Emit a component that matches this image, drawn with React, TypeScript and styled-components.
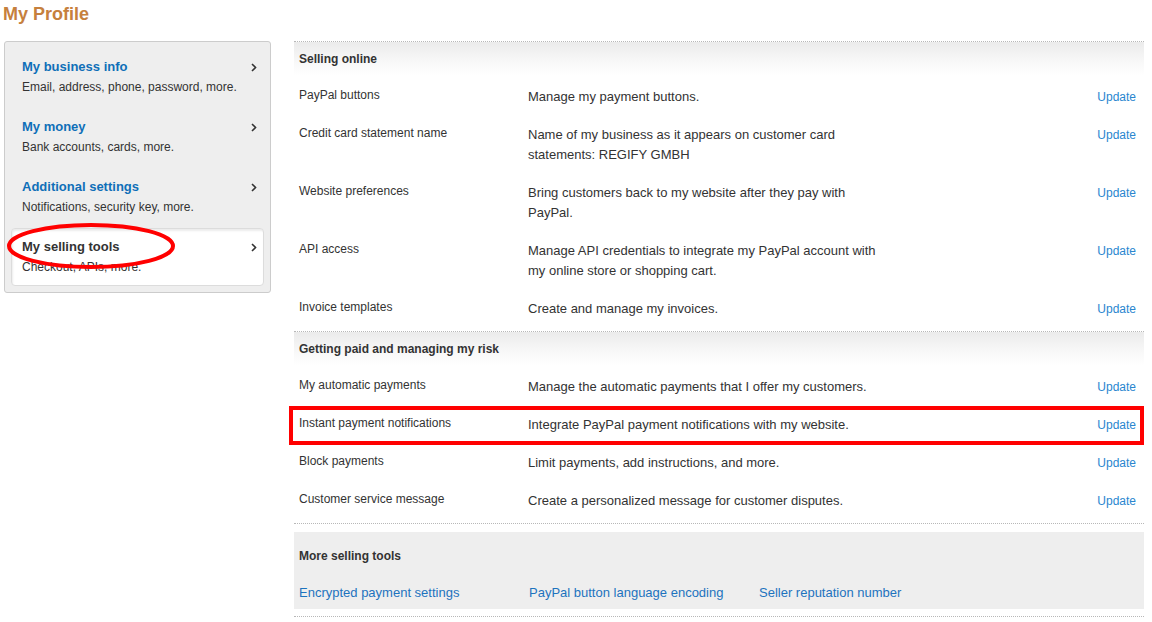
import React from "react";
import styled, { createGlobalStyle } from "styled-components";

// ─── Global ──────────────────────────────────────────────────────────────────
const GlobalStyle = createGlobalStyle`
  body {
    margin: 0;
    background: #fff;
    font-family: "Liberation Sans", Arial, sans-serif;
    color: #333;
  }
`;

// ─── Layout ──────────────────────────────────────────────────────────────────
const Page = styled.div`
  width: 1152px;
  height: 622px;
  overflow: hidden;
  padding: 3px 0 0 3px;
  box-sizing: border-box;
`;

const PageTitle = styled.h1`
  margin: 0;
  font-size: 18px;
  line-height: 22px;
  font-weight: 700;
  color: #c6803d;
`;

const Columns = styled.div`
  display: flex;
  align-items: flex-start;
  gap: 23px;
  margin-top: 16px;
  padding-left: 1px;
`;

// ─── Sidebar ─────────────────────────────────────────────────────────────────
const Sidebar = styled.nav`
  width: 267px;
  box-sizing: border-box;
  background: #eeeeee;
  border: 1px solid #cccccc;
  border-radius: 3px;
  padding: 6px;
  display: flex;
  flex-direction: column;
  gap: 2px;
`;

const NavItem = styled.div<{ $active?: boolean }>`
  position: relative;
  height: 58px;
  box-sizing: border-box;
  padding: 10px 6px 0 10px;
  border-radius: 4px;
  background: ${(p) => (p.$active ? "#fff" : "transparent")};
  border: 1px solid ${(p) => (p.$active ? "#dcdcdc" : "transparent")};
  box-shadow: ${(p) => (p.$active ? "inset 1px 2px 2px rgba(0,0,0,0.08)" : "none")};
`;

const NavHead = styled.div`
  display: flex;
  align-items: center;
  justify-content: space-between;
`;

const NavTitle = styled.span<{ $active?: boolean }>`
  font-size: 13px;
  line-height: 16px;
  font-weight: 700;
  color: ${(p) => (p.$active ? "#333" : "#0f6fb8")};
`;

const NavDesc = styled.div`
  margin-top: 4px;
  font-size: 12px;
  line-height: 16px;
  color: #333;
`;

// red hand-drawn annotation over the active item
const Ellipse = styled.svg`
  position: absolute;
  left: -12px;
  top: -12px;
  pointer-events: none;
`;

const Chevron = () => (
  <svg width="6" height="9" viewBox="0 0 6 9">
    <path d="M1 1 L4.5 4.5 L1 8" fill="none" stroke="#333" strokeWidth="1.6" />
  </svg>
);

// ─── Main table ──────────────────────────────────────────────────────────────
const Main = styled.main`
  width: 850px;
`;

const Section = styled.section`
  border-top: 1px dotted #b8b8b8;
  padding-bottom: 6px;
`;

const SectionHead = styled.div`
  height: 33px;
  display: flex;
  align-items: center;
  padding-left: 5px;
  font-size: 12px;
  font-weight: 700;
  color: #333;
  background: linear-gradient(to bottom, #ebebeb 0%, #f6f6f6 50%, #fff 100%);
`;

const Row = styled.div<{ $marked?: boolean }>`
  position: relative;
  display: grid;
  grid-template-columns: 229px 1fr 60px;
  padding: 12px 8px 6px 5px;
  &::after {
    content: "";
    display: ${(p) => (p.$marked ? "block" : "none")};
    position: absolute;
    left: -5px;
    right: 0;
    top: 3px;
    bottom: -4px;
    border: 4px solid #ff0000;
    pointer-events: none;
  }
`;

const Label = styled.div`
  font-size: 12px;
  line-height: 16px;
  color: #333;
`;

const Desc = styled.div`
  font-size: 13px;
  line-height: 20px;
  color: #333;
  max-width: 360px;
`;

const UpdateLink = styled.a`
  justify-self: end;
  font-size: 12px;
  line-height: 20px;
  color: #2a86cf;
  text-decoration: none;
`;

const MoreSection = styled.section`
  border-top: 1px dotted #b8b8b8;
  border-bottom: 1px dotted #b8b8b8;
  padding: 8px 0 7px;
`;

const MoreBox = styled.div`
  background: #eeeeee;
  height: 77px;
  box-sizing: border-box;
  padding: 16px 5px 0;
`;

const MoreTitle = styled.div`
  font-size: 12px;
  font-weight: 700;
  line-height: 16px;
  color: #333;
`;

const MoreLinks = styled.div`
  display: grid;
  grid-template-columns: 230px 230px 230px;
  margin-top: 20px;
`;

const MoreLink = styled.a`
  font-size: 13px;
  line-height: 18px;
  color: #1d73be;
  text-decoration: none;
`;

// ─── Data ────────────────────────────────────────────────────────────────────
const navItems = [
  { title: "My business info", desc: "Email, address, phone, password, more." },
  { title: "My money", desc: "Bank accounts, cards, more." },
  { title: "Additional settings", desc: "Notifications, security key, more." },
  { title: "My selling tools", desc: "Checkout, APIs, more.", active: true },
];

type Item = { label: string; desc: string; marked?: boolean };

const sections: { title: string; rows: Item[] }[] = [
  {
    title: "Selling online",
    rows: [
      { label: "PayPal buttons", desc: "Manage my payment buttons." },
      {
        label: "Credit card statement name",
        desc: "Name of my business as it appears on customer card statements: REGIFY GMBH",
      },
      {
        label: "Website preferences",
        desc: "Bring customers back to my website after they pay with PayPal.",
      },
      {
        label: "API access",
        desc: "Manage API credentials to integrate my PayPal account with my online store or shopping cart.",
      },
      { label: "Invoice templates", desc: "Create and manage my invoices." },
    ],
  },
  {
    title: "Getting paid and managing my risk",
    rows: [
      { label: "My automatic payments", desc: "Manage the automatic payments that I offer my customers." },
      {
        label: "Instant payment notifications",
        desc: "Integrate PayPal payment notifications with my website.",
        marked: true,
      },
      { label: "Block payments", desc: "Limit payments, add instructions, and more." },
      { label: "Customer service message", desc: "Create a personalized message for customer disputes." },
    ],
  },
];

const moreLinks = [
  "Encrypted payment settings",
  "PayPal button language encoding",
  "Seller reputation number",
];

// ─── Component ───────────────────────────────────────────────────────────────
const App: React.FC = () => (
  <Page>
    <GlobalStyle />
    <PageTitle>My Profile</PageTitle>
    <Columns>
      <Sidebar>
        {navItems.map((n) => (
          <NavItem key={n.title} $active={n.active}>
            <NavHead>
              <NavTitle $active={n.active}>{n.title}</NavTitle>
              <Chevron />
            </NavHead>
            <NavDesc>{n.desc}</NavDesc>
            {n.active && (
              <Ellipse width="180" height="60" viewBox="0 0 180 60">
                <ellipse
                  cx="91"
                  cy="29"
                  rx="82"
                  ry="21"
                  fill="none"
                  stroke="#ff0000"
                  strokeWidth="4"
                />
              </Ellipse>
            )}
          </NavItem>
        ))}
      </Sidebar>

      <Main>
        {sections.map((s) => (
          <Section key={s.title}>
            <SectionHead>{s.title}</SectionHead>
            {s.rows.map((r) => (
              <Row key={r.label} $marked={r.marked}>
                <Label>{r.label}</Label>
                <Desc>{r.desc}</Desc>
                <UpdateLink href="#">Update</UpdateLink>
              </Row>
            ))}
          </Section>
        ))}
        <MoreSection>
          <MoreBox>
            <MoreTitle>More selling tools</MoreTitle>
            <MoreLinks>
              {moreLinks.map((l) => (
                <MoreLink key={l} href="#">
                  {l}
                </MoreLink>
              ))}
            </MoreLinks>
          </MoreBox>
        </MoreSection>
      </Main>
    </Columns>
  </Page>
);

export default App;
